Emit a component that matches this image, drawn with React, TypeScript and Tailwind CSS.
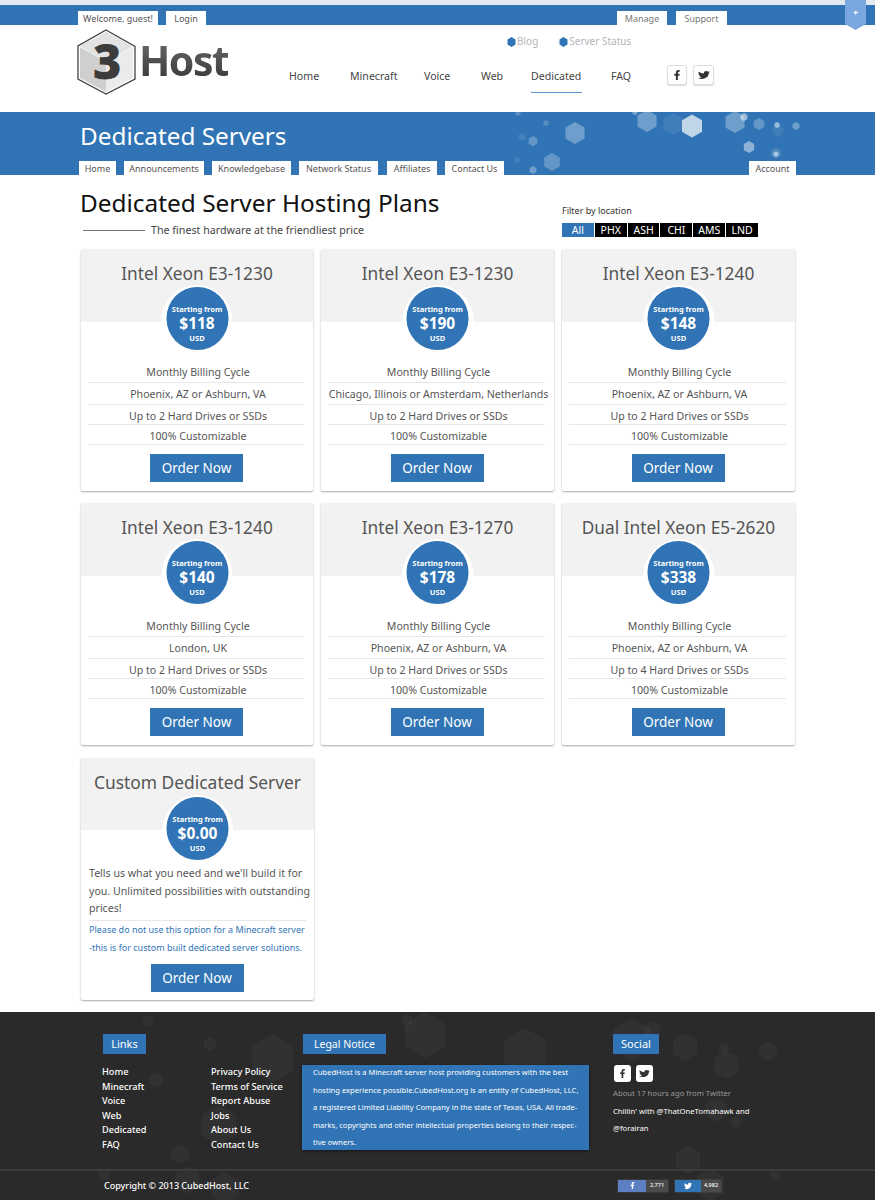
import React from "react";
import { FaFacebookF, FaTwitter } from "react-icons/fa";

type H = [number, number, number, number?];
const hexPoints = (cx: number, cy: number, r: number) => {
  const w = r * 0.87;
  return `${cx},${cy - r} ${cx + w},${cy - r / 2} ${cx + w},${cy + r / 2} ${cx},${cy + r} ${cx - w},${cy + r / 2} ${cx - w},${cy - r / 2}`;
};

const bannerHex: H[] = [
  [575, 21, 11, 0.3], [647, 9, 11, 0.3], [673, 12, 11, 0.08], [692, 14, 11.5, 0.7], [735, 10, 11, 0.3],
  [759, 12, 6, 0.25], [744, 5, 4, 0.5], [777, 13, 3, 0.5], [796, 14, 4, 0.3], [778, 19, 6, 0.08],
  [749, 35, 6, 0.45], [776, 42, 3, 0.5], [776, 41, 6, 0.1], [552, 50, 9, 0.25], [533, 29, 5, 0.25],
  [546, 11, 3, 0.2], [522, 25, 4, 0.1], [518, 1, 3, 0.2], [517, 48, 3, 0.1], [533, 58, 4, 0.3], [635, 0, 3, 0.4],
];
const footerHex: H[] = [
  [148, 9, 6], [210, 32, 7], [273, 46, 24], [156, 68, 8], [219, 113, 20], [180, 142, 10], [104, 163, 6],
  [187, 168, 14], [225, 176, 16], [425, 23, 23], [407, 8, 6], [525, 40, 24], [632, 28, 21], [652, 18, 9],
  [685, 35, 14], [724, 36, 6], [768, 39, 10], [726, 53, 14], [736, 110, 6], [716, 98, 12], [688, 148, 14],
  [775, 163, 6], [710, 173, 16],
];

function Tab({ children, className = "" }: { children: React.ReactNode; className?: string }) {
  return (
    <div className={`bg-white h-[14px] flex items-center justify-center text-[9px] text-[#555] leading-none ${className}`}>
      {children}
    </div>
  );
}

function SocialSquare({ icon, className = "" }: { icon: React.ReactNode; className?: string }) {
  return <div className={`flex items-center justify-center bg-white rounded-[3px] ${className}`}>{icon}</div>;
}

function Badge({ price, className = "top-[36px]" }: { price: string; className?: string }) {
  return (
    <div className={`absolute left-1/2 -translate-x-1/2 w-[71px] h-[71px] rounded-full bg-white flex items-start justify-center pt-[2px] ${className}`}>
      <div className="w-[62px] h-[63px] rounded-full bg-[#3074b5] text-white flex flex-col items-center text-center">
        <div className="text-[7.5px] font-bold leading-none mt-[19px]">Starting from</div>
        <div className="text-[15.5px] font-bold leading-none mt-[2px] h-[17px]">{price}</div>
        <div className="text-[7.5px] font-bold leading-none mt-[2px]">USD</div>
      </div>
    </div>
  );
}

function Order() {
  return (
    <div className="flex justify-center pr-[1px]">
      <div className="w-[93px] h-[28px] bg-[#3074b5] text-white text-[13.5px] flex items-center justify-center">Order Now</div>
    </div>
  );
}

function Card({ title, price, rows }: { title: string; price: string; rows: string[] }) {
  const heights = ["h-[22px] pt-[3px]", "h-[22px] pt-[3px]", "h-[20px] pt-[4px]", "h-[20px] pt-[4px]"];
  return (
    <div className="bg-white rounded-[2px] shadow-[0_1px_2px_rgba(0,0,0,0.35)] h-[242px]">
      <div className="relative h-[73px] bg-[#f2f2f2] text-center">
        <div className="text-[17.3px] text-[#555] leading-none pt-[16px]">{title}</div>
        <Badge price={price} />
      </div>
      <div className="pl-[7px] pr-[9px] pt-[39px] text-[10.6px] text-[#555] text-center">
        {rows.map((r, i) => (
          <div key={i} className={`${heights[i]} border-b border-[#e8e8e8] flex items-center justify-center whitespace-nowrap pl-[4px]`}>
            {r}
          </div>
        ))}
      </div>
      <div className="pt-[9px]">
        <Order />
      </div>
    </div>
  );
}

const base = (loc: string, drives = "Up to 2 Hard Drives or SSDs") => ["Monthly Billing Cycle", loc, drives, "100% Customizable"];
const PA = "Phoenix, AZ or Ashburn, VA";
const plans = [
  { title: "Intel Xeon E3-1230", price: "$118", rows: base(PA) },
  { title: "Intel Xeon E3-1230", price: "$190", rows: base("Chicago, Illinois or Amsterdam, Netherlands") },
  { title: "Intel Xeon E3-1240", price: "$148", rows: base(PA) },
  { title: "Intel Xeon E3-1240", price: "$140", rows: base("London, UK") },
  { title: "Intel Xeon E3-1270", price: "$178", rows: base(PA) },
  { title: "Dual Intel Xeon E5-2620", price: "$338", rows: base(PA, "Up to 4 Hard Drives or SSDs") },
];

function FooterHead({ children, className = "" }: { children: React.ReactNode; className?: string }) {
  return (
    <div className={`h-[20px] bg-[#3074b5] text-white text-[11px] flex items-center justify-center ${className}`}>{children}</div>
  );
}

export default function App() {
  return (
    <div className="w-[875px] h-[1200px] overflow-hidden bg-white font-['Noto_Sans',sans-serif] relative">
      {/* top bar */}
      <div className="border-t-[5px] border-[#e3e9ef] h-[25px] bg-[#3074b5] flex items-end pl-[78px]">
        <Tab className="w-[80px]">Welcome, guest!</Tab>
        <Tab className="w-[40px] ml-[8px]">Login</Tab>
        <Tab className="w-[50px] ml-[411px] text-[#777]">Manage</Tab>
        <Tab className="w-[51px] ml-[9px] text-[#777]">Support</Tab>
      </div>
      <div className="absolute left-[845px] top-0 w-[21px] h-[30px] bg-[#7ba7e0] [clip-path:polygon(0_0,100%_0,100%_80%,50%_100%,0_80%)] flex items-center justify-center text-white text-[9px] font-bold pb-[4px]">
        +
      </div>

      {/* header */}
      <div className="h-[87px] flex pl-[77px]">
        <div className="w-[212px] flex items-start pt-[4px] shrink-0">
          <svg width="60" height="66" viewBox="0 0 60 66" className="shrink-0">
            <polygon points="29,1 58,17.5 58,50 29,65 1,50 1,17" fill="#fff" stroke="#444" strokeWidth="1.3" />
            <polygon points="3,18 29,33 29,63 3,49" fill="#cfcfcf" />
            <polygon points="29,33 56,18 56,49 29,63" fill="#ebebeb" />
            <polygon points="3,17 29,3 56,17 29,33" fill="#e2e2e2" />
            <text x="30" y="50" textAnchor="middle" fontSize="48" fontWeight="800" stroke="#3c3c3c" strokeWidth="1" fill="#3c3c3c" fontFamily="'Noto Sans',sans-serif">3</text>
          </svg>
          <div className="text-[41px] font-bold leading-none tracking-[-1.5px] mt-[11px] ml-[2px] pb-[4px] bg-linear-to-b from-[#6a6a6a] to-[#343434] bg-clip-text text-transparent">Host</div>
        </div>
        <div className="flex-1">
          <div className="h-[33px] flex items-center pl-[218px] text-[10px] text-[#b5b5b5]">
            <svg width="9" height="10" viewBox="0 0 9 10"><polygon points="4.5,0 8.5,2.5 8.5,7.5 4.5,10 0.5,7.5 0.5,2.5" fill="#3074b5" /></svg>
            <span className="ml-[1px]">Blog</span>
            <svg width="9" height="10" viewBox="0 0 9 10" className="ml-[21px]"><polygon points="4.5,0 8.5,2.5 8.5,7.5 4.5,10 0.5,7.5 0.5,2.5" fill="#3074b5" /></svg>
            <span className="ml-[1px]">Server Status</span>
          </div>
          <div className="flex items-start text-[10.6px] text-[#444] leading-none">
            <div className="w-[61px] pt-[13px]">Home</div>
            <div className="w-[74px] pt-[13px]">Minecraft</div>
            <div className="w-[57px] pt-[13px]">Voice</div>
            <div className="w-[50px] pt-[13px]">Web</div>
            <div className="w-[80px] pt-[13px]">
              <div className="w-[51px] h-[22px] border-b border-[#5f98d6]">Dedicated</div>
            </div>
            <div className="w-[56px] pt-[13px]">FAQ</div>
            <SocialSquare className="w-[20px] h-[20px] mt-[7px] border border-[#ddd] shadow-[0_1px_1px_rgba(0,0,0,0.15)]" icon={<FaFacebookF className="text-[10px] text-[#333]" />} />
            <SocialSquare className="w-[21px] h-[20px] mt-[7px] ml-[6px] border border-[#ddd] shadow-[0_1px_1px_rgba(0,0,0,0.15)]" icon={<FaTwitter className="text-[12px] text-[#333] scale-y-[0.8]" />} />
          </div>
        </div>
      </div>

      {/* banner */}
      <div className="relative h-[63px] bg-[#3074b5] overflow-hidden">
        <svg className="absolute inset-0" width="875" height="63">
          {bannerHex.map(([x, y, r, o], i) => (
            <polygon key={i} points={hexPoints(x, y, r)} fill="#fff" fillOpacity={o} />
          ))}
        </svg>
        <div className="relative h-[49px] pl-[80px] pt-[9px] text-[24.3px] text-white leading-[30px]">Dedicated Servers</div>
        <div className="relative flex pl-[79px]">
          <Tab className="w-[37px]">Home</Tab>
          <Tab className="w-[80px] ml-[8px]">Announcements</Tab>
          <Tab className="w-[79px] ml-[8px]">Knowledgebase</Tab>
          <Tab className="w-[79px] ml-[8px]">Network Status</Tab>
          <Tab className="w-[50px] ml-[9px]">Affiliates</Tab>
          <Tab className="w-[59px] ml-[8px]">Contact Us</Tab>
          <Tab className="w-[47px] ml-[245px]">Account</Tab>
        </div>
      </div>

      {/* heading */}
      <div className="h-[74px] pl-[80px] flex">
        <div className="w-[482px]">
          <div className="text-[24.4px] text-[#111] leading-none pt-[16px]">Dedicated Server Hosting Plans</div>
          <div className="flex items-center mt-[10px] text-[10.7px] text-[#444] leading-none pl-[3px]">
            <div className="w-[62px] h-[1px] bg-[#777] mr-[6px]" />
            The finest hardware at the friendliest price
          </div>
        </div>
        <div className="pt-[31px]">
          <div className="text-[9px] text-[#333] leading-none">Filter by location</div>
          <div className="flex gap-[1px] mt-[8px] text-[10.5px] text-white">
            {["All", "PHX", "ASH", "CHI", "AMS", "LND"].map((l, i) => (
              <div key={l} className={`w-[31.83px] h-[14px] flex items-center justify-center leading-none ${i === 0 ? "bg-[#3074b5]" : "bg-black"}`}>
                {l}
              </div>
            ))}
          </div>
        </div>
      </div>

      {/* plans */}
      <div className="pl-[81px] w-[795px] grid grid-cols-[232px_233px_233px] gap-x-[8px] gap-y-[12px]">
        {plans.map((p, i) => (
          <Card key={i} {...p} />
        ))}
        <div className="bg-white rounded-[2px] shadow-[0_1px_2px_rgba(0,0,0,0.35)] h-[242px] mt-[1px] w-[233px]">
          <div className="relative h-[72px] bg-[#f2f2f2] text-center">
            <div className="text-[17.4px] text-[#555] leading-none pt-[16px]">Custom Dedicated Server</div>
            <Badge price="$0.00" className="top-[37px]" />
          </div>
          <div className="px-[8px] pt-[35px] text-[10.6px] leading-[17.5px] text-[#555]">
            <div className="border-b border-[#e8e8e8] h-[56px] whitespace-nowrap">
              Tells us what you need and we'll build it for
              <br />
              you. Unlimited possibilities with outstanding
              <br />
              prices!
            </div>
            <div className="text-[9px] leading-[17.5px] text-[#3074b5] whitespace-nowrap">
              Please do not use this option for a Minecraft server
              <br />
              -this is for custom built dedicated server solutions.
            </div>
          </div>
          <div className="pt-[8px]">
            <Order />
          </div>
        </div>
      </div>

      {/* footer */}
      <div className="absolute left-0 right-0 top-[1012px] h-[188px] bg-[#2a2a2a] text-white">
        <svg className="absolute inset-0" width="875" height="188">
          {footerHex.map(([x, y, r], i) => (
            <polygon key={i} points={hexPoints(x, y, r)} fill="#fff" fillOpacity={0.035} />
          ))}
        </svg>
        <div className="relative h-[159px] border-b-2 border-[#3c3c3c] flex pl-[102px] pt-[22px]">
          <div className="w-[109px]">
            <FooterHead className="w-[43px] ml-[1px]">Links</FooterHead>
            <div className="mt-[11px] text-[9.2px] font-medium leading-[14.6px]">
              {["Home", "Minecraft", "Voice", "Web", "Dedicated", "FAQ"].map((t) => (
                <div key={t}>{t}</div>
              ))}
            </div>
          </div>
          <div className="w-[91px] pt-[31px] text-[9.2px] font-medium leading-[14.6px]">
            {["Privacy Policy", "Terms of Service", "Report Abuse", "Jobs", "About Us", "Contact Us"].map((t) => (
              <div key={t}>{t}</div>
            ))}
          </div>
          <div className="w-[287px]">
            <FooterHead className="w-[83px] ml-[1px] pt-[1px]"><span className="text-[10.5px]">Legal Notice</span></FooterHead>
            <div className="mt-[11px] h-[85px] bg-[#3074b5] shadow-[0_1px_3px_rgba(0,0,0,0.5)] pl-[11px] text-[7.6px] leading-[17.5px] whitespace-nowrap">
              <div className="-translate-y-[1px]">
                CubedHost is a Minecraft server host providing customers with the best
                <br />
                hosting experience possible.CubedHost.org is an entity of CubedHost, LLC,
                <br />
                a registered Limited Liability Company in the state of Texas, USA. All trade-
                <br />
                marks, copyrights and other intellectual properties belong to their respec-
                <br />
                tive owners.
              </div>
            </div>
          </div>
          <div className="ml-[24px]">
            <FooterHead className="w-[46px]">Social</FooterHead>
            <div className="flex gap-[5px] mt-[11px] ml-[1px]">
              <SocialSquare className="w-[17px] h-[17px]" icon={<FaFacebookF className="text-[9px] text-[#333]" />} />
              <SocialSquare className="w-[17px] h-[17px]" icon={<FaTwitter className="text-[11px] text-[#333] scale-y-[0.8]" />} />
            </div>
            <div className="text-[7.7px] leading-[17.5px] mt-[3px] text-[#999]">About 17 hours ago from Twitter</div>
            <div className="text-[7.7px] leading-[17.5px] whitespace-nowrap">
              Chillin' with @ThatOneTomahawk and
              <br />
              @forairan
            </div>
          </div>
        </div>
        <div className="relative flex items-center pl-[104px] h-[29px] text-[9px] font-medium">
          <div className="w-[514px]">Copyright © 2013 CubedHost, LLC</div>
          <div className="flex h-[12px] w-[50px] shadow-[0_0_1px_rgba(255,255,255,0.4)]">
            <div className="w-[28px] bg-[#5b7fc0] flex items-center justify-center"><FaFacebookF className="text-[7px]" /></div>
            <div className="flex-1 bg-[#4a4a4a] text-[5.5px] flex items-center justify-center">2,771</div>
          </div>
          <div className="flex h-[12px] w-[46px] ml-[7px] shadow-[0_0_1px_rgba(255,255,255,0.4)]">
            <div className="w-[26px] bg-[#3074b5] flex items-center justify-center"><FaTwitter className="text-[8px]" /></div>
            <div className="flex-1 bg-[#4a4a4a] text-[5.5px] flex items-center justify-center">4,982</div>
          </div>
        </div>
      </div>
    </div>
  );
}
